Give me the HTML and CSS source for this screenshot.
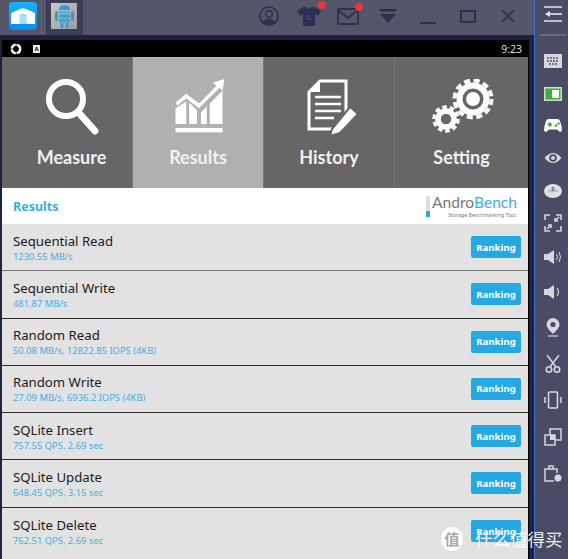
FILE: index.html
```html
<!DOCTYPE html>
<html lang="en">
<head>
  <meta charset="UTF-8">
  <title>AndroBench Results</title>
  <link rel="stylesheet" href="styles.css">
</head>
<body>
  <div class="window">
    <div class="main">
      <header class="titlebar">
        <div class="home-tab">
          <div class="home-tile">
            <svg width="24" height="16" viewBox="0 0 24 16"><path d="M0 5 Q6 2 12 0 Q18 2 24 5 V16 H0Z" fill="#fff"/><rect x="8.500" y="6" width="7" height="10" fill="#a5dcf8"/></svg>
          </div>
        </div>
        <div class="app-tab">
          <div class="app-tile">
            <svg width="19" height="24" viewBox="0 0 19 24"><path d="M4 6 Q4 1 9.500 1 Q15 1 15 6Z" fill="#2e9cd6"/><path d="M4 7 H15 V9.500 H4Z" fill="#4ab2e6"/><path d="M4 10.500 H15 V13.500 H4Z" fill="#2e9cd6"/><path d="M4 14.500 H15 V18.500 H4Z" fill="#3aa6de"/><rect x="0" y="7" width="3" height="10" rx="1.500" fill="#2e9cd6"/><rect x="16" y="7" width="3" height="10" rx="1.500" fill="#2e9cd6"/><rect x="5.500" y="19" width="3" height="5" rx="1" fill="#2e9cd6"/><rect x="10.500" y="19" width="3" height="5" rx="1" fill="#2e9cd6"/></svg>
          </div>
        </div>
        <div class="title-actions">
          <svg class="act act-user" width="20" height="20" viewBox="0 0 20 20"><circle cx="10" cy="10" r="9" fill="none" stroke="#2d3050" stroke-width="1.600"/><circle cx="10" cy="8" r="3.400" fill="none" stroke="#2d3050" stroke-width="1.600"/><path d="M3.500 16 Q10 9.500 16.500 16 Q10 21 3.500 16Z" fill="#2d3050"/></svg>
          <div class="act act-shirt">
            <svg width="26" height="20" viewBox="0 0 26 20"><path d="M7 1 L10 1 Q13 4 16 1 L19 1 L25 5 L22 10 L19 8 V20 H7 V8 L4 10 L1 5Z" fill="#2d3050"/><path d="M10 10 H15 M16 13 H11" stroke="#555669" stroke-width="1.200"/></svg>
            <span class="dot"></span>
          </div>
          <div class="act act-mail">
            <svg width="22" height="17" viewBox="0 0 22 17"><rect x="1" y="1" width="20" height="15" rx="1.500" fill="none" stroke="#2d3050" stroke-width="2"/><path d="M1 2 L11 10 L21 2" fill="none" stroke="#2d3050" stroke-width="2"/></svg>
            <span class="dot"></span>
          </div>
          <svg class="act act-drop" width="16" height="14" viewBox="0 0 16 14" fill="#2d3050"><rect width="16" height="2.500"/><path d="M0 5 H16 L8 14Z"/></svg>
          <span class="act act-min"></span>
          <span class="act act-max"></span>
          <svg class="act act-close" width="14" height="14" viewBox="0 0 14 14"><path d="M1 1 L13 13 M13 1 L1 13" stroke="#2d3050" stroke-width="1.800"/></svg>
        </div>
      </header>

      <div class="device">
        <div class="statusbar">
          <svg width="12" height="12" viewBox="0 0 12 12"><circle cx="6" cy="6" r="4.200" fill="none" stroke="#fff" stroke-width="2.400" stroke-dasharray="5.800 0.800"/></svg>
          <span class="status-a">A</span>
          <span class="status-time">9:23</span>
        </div>

        <nav class="tabs">
          <div class="tab tab-first">
            <svg class="tab-icon" width="56" height="60" viewBox="0 0 56 60"><circle cx="22" cy="20" r="17" fill="none" stroke="#fff" stroke-width="6"/><path d="M35 34 L51 52" stroke="#fff" stroke-width="7" stroke-linecap="round"/></svg>
            <span>Measure</span>
          </div>
          <div class="tab tab-active">
            <svg class="tab-icon" width="56" height="60" viewBox="0 0 56 60" fill="#fff"><g transform="translate(3.500,-3) scale(0.98)"><path d="M2 27 L13 18 L26 28 L44 10 L40 7 L52 3 L50 15 L47 12 L26 33 L13 23 L4 30Z"/><path d="M2 33 L13 26 V49 H2Z M16 27 L24 35 V49 H16Z M28 37 L34 31 V49 H28Z M37 28 L50 15 V49 H37Z"/><rect x="2" y="53" width="48" height="4.500"/></g></svg>
            <span>Results</span>
          </div>
          <div class="tab">
            <svg class="tab-icon tab-icon-history" width="56" height="60" viewBox="0 0 56 60"><path d="M14 2 H40 V34 L27 50 H3 V13Z" fill="none" stroke="#fff" stroke-width="3"/><path d="M14 2 V13 H3Z" fill="#fff"/><path d="M9 18 H35 M9 25 H35 M9 32 H35 M9 39 H28" stroke="#fff" stroke-width="2.600"/><path d="M26 50 L44 28 L52 35 L34 54 L24 57Z" fill="#fff" stroke="#666" stroke-width="2"/></svg>
            <span>History</span>
          </div>
          <div class="tab tab-last">
            <svg class="tab-icon" width="64" height="60" viewBox="0 0 64 60">
              <circle cx="43" cy="20" r="13.500" fill="none" stroke="#fff" stroke-width="6"/>
              <circle cx="43" cy="20" r="7" fill="#fff"/>
              <circle cx="43" cy="20" r="18.500" fill="none" stroke="#fff" stroke-width="4" stroke-dasharray="6 3.700"/>
              <circle cx="16" cy="40" r="8" fill="none" stroke="#fff" stroke-width="5.500"/>
              <circle cx="16" cy="40" r="12" fill="none" stroke="#fff" stroke-width="3.500" stroke-dasharray="4.500 3"/>
            </svg>
            <span>Setting</span>
          </div>
        </nav>

        <div class="results-head">
          <h1>Results</h1>
          <div class="logo">
            <span class="logo-bar"></span>
            <div>
              <div class="logo-name"><b>Andro</b><i>Bench</i></div>
              <div class="logo-sub">Storage Benchmarking Tool.</div>
            </div>
          </div>
        </div>

        <ul class="rows">
          <li class="row"><div class="row-text"><div class="row-name">Sequential Read</div><div class="row-val">1230.55 MB/s</div></div><button class="rank">Ranking</button></li>
          <li class="row"><div class="row-text"><div class="row-name">Sequential Write</div><div class="row-val">481.87 MB/s</div></div><button class="rank">Ranking</button></li>
          <li class="row"><div class="row-text"><div class="row-name">Random Read</div><div class="row-val">50.08 MB/s, 12822.85 IOPS (4KB)</div></div><button class="rank">Ranking</button></li>
          <li class="row"><div class="row-text"><div class="row-name">Random Write</div><div class="row-val">27.09 MB/s, 6936.2 IOPS (4KB)</div></div><button class="rank">Ranking</button></li>
          <li class="row"><div class="row-text"><div class="row-name">SQLite Insert</div><div class="row-val">757.55 QPS, 2.69 sec</div></div><button class="rank">Ranking</button></li>
          <li class="row"><div class="row-text"><div class="row-name">SQLite Update</div><div class="row-val">648.45 QPS, 3.15 sec</div></div><button class="rank">Ranking</button></li>
          <li class="row"><div class="row-text"><div class="row-name">SQLite Delete</div><div class="row-val">762.51 QPS, 2.69 sec</div></div><button class="rank">Ranking</button></li>
        </ul>
      </div>
    </div>

    <aside class="sidebar">
      <svg width="18" height="16" viewBox="0 0 18 16"><path d="M0 1 H18 M0 15 H18" stroke="#e4e4ea" stroke-width="1.600"/><path d="M6 8 H18" stroke="#e4e4ea" stroke-width="1.600"/><path d="M1 8 L6 5 V11Z" fill="#e4e4ea"/></svg>
      <span class="side-rule"></span>
      <div class="tools">
        <span class="tool"><svg width="18" height="14" viewBox="0 0 18 14"><rect width="18" height="14" fill="#d6d6dc"/><path d="M3 4 H15 M3 7 H15 M5 10 H13" stroke="#55566e" stroke-width="1.600" stroke-dasharray="2 1"/></svg></span>
        <span class="tool"><svg width="18" height="14" viewBox="0 0 18 14"><rect width="18" height="14" fill="#d6d6dc"/><rect x="1.500" y="1.500" width="15" height="11" fill="#35b52e"/><rect x="8" y="3" width="7" height="8" fill="#fff"/></svg></span>
        <span class="tool"><svg width="18" height="14" viewBox="0 0 18 14"><path d="M4 0 H14 Q17 1 18 11 Q17 15 13 10.500 H5 Q1 15 0 11 Q1 1 4 0Z" fill="#fff"/><path d="M3.500 5.500 H8 M5.700 3.300 V7.700" stroke="#3fae2a" stroke-width="1.800"/><circle cx="12" cy="6.500" r="1.300" fill="#3fae2a"/><circle cx="14.500" cy="4.500" r="1.300" fill="#3fae2a"/></svg></span>
        <span class="tool"><svg width="18" height="12" viewBox="0 0 18 12"><path d="M0.500 6 Q9 -4 17.500 6 Q9 16 0.500 6Z" fill="#d6d6dc"/><circle cx="9" cy="6" r="3.800" fill="#4a4b64"/><circle cx="9" cy="6" r="2" fill="#d6d6dc"/></svg></span>
        <span class="tool"><svg width="18" height="14" viewBox="0 0 18 14"><ellipse cx="9" cy="7" rx="9" ry="7" fill="#e0e0e4"/><path d="M9 2 V7 M4 7 H14" stroke="#9a9aa6" stroke-width="1"/><rect x="7.600" y="3" width="2.800" height="4" rx="1" fill="#8a8a96"/></svg></span>
        <span class="tool"><svg width="18" height="18" viewBox="0 0 18 18" fill="none" stroke="#d6d6dc" stroke-width="1.600"><path d="M1 6 V1 H6 M12 1 H17 V6 M17 12 V17 H12 M6 17 H1 V12"/><path d="M11 7 L15 3 M11 4 V7 H14 M7 11 L3 15 M4 11 H7 V14"/></svg></span>
        <span class="tool tool-vol"><svg width="18" height="18" viewBox="0 0 18 18"><path d="M0 6 H4 L10 2 V16 L4 12 H0Z" fill="#d6d6dc"/><path d="M12.500 6 Q14.500 9 12.500 12 M15 4 Q18 9 15 14" fill="none" stroke="#d6d6dc" stroke-width="1"/></svg></span>
        <span class="tool tool-vol"><svg width="18" height="18" viewBox="0 0 18 18"><path d="M0 6 H4 L10 2 V16 L4 12 H0Z" fill="#d6d6dc"/><path d="M13 5 Q16 9 13 13" fill="none" stroke="#d6d6dc" stroke-width="1.200"/></svg></span>
        <span class="tool tool-tall"><svg width="14" height="19" viewBox="0 0 14 19"><path d="M7 0 A6.500 6.500 0 0 1 13.500 6.500 Q13.500 10 7 16 Q0.500 10 0.500 6.500 A6.500 6.500 0 0 1 7 0Z" fill="#d6d6dc"/><circle cx="7" cy="6.500" r="2.600" fill="#4a4b64"/><path d="M2 18 H12" stroke="#d6d6dc" stroke-width="1.200"/></svg></span>
        <span class="tool tool-tall"><svg width="16" height="18" viewBox="0 0 16 18" fill="none" stroke="#d6d6dc" stroke-width="1.600"><path d="M2 0 L11 12 M14 0 L5 12"/><circle cx="4" cy="14.500" r="2.700"/><circle cx="12" cy="14.500" r="2.700"/></svg></span>
        <span class="tool tool-tall"><svg width="18" height="18" viewBox="0 0 18 18" fill="none" stroke="#d6d6dc" stroke-width="1.600"><rect x="4.500" y="1" width="9" height="16" rx="1"/><path d="M1 6 V12 M17 6 V12"/></svg></span>
        <span class="tool tool-tall"><svg width="18" height="18" viewBox="0 0 18 18"><rect x="6" y="1" width="11" height="11" fill="none" stroke="#d6d6dc" stroke-width="1.500"/><rect x="1" y="7" width="10" height="10" fill="#4a4b64" stroke="#d6d6dc" stroke-width="1.500"/><rect x="6" y="7" width="5" height="5" fill="#d6d6dc"/></svg></span>
        <span class="tool tool-tall"><svg width="18" height="18" viewBox="0 0 18 18"><path d="M10 17 H1 V5 H13 V9" fill="none" stroke="#d6d6dc" stroke-width="1.500"/><path d="M5 5 V2 H9 V5" fill="none" stroke="#d6d6dc" stroke-width="1.500"/><circle cx="14" cy="14" r="3.500" fill="#d6d6dc"/></svg></span>
      </div>
    </aside>
  </div>

  <div class="watermark">
    <span class="wm-badge">值</span>
    <span class="wm-text">什么值得买</span>
  </div>
</body>
</html>
```

FILE: styles.css
```css
* {
  box-sizing: border-box;
}
html, body {
  margin: 0;
  height: 100%;
  overflow: hidden;
}
body {
  position: relative;
  font-family: "Noto Sans", "Noto Sans CJK SC", sans-serif;
  background: #4a4b64;
}
.window {
  display: flex;
  height: 559px;
}
.main {
  width: 534px;
  display: flex;
  flex-direction: column;
  background: #1e2140;
}

/* title bar */
.titlebar {
  height: 35px;
  flex: none;
  display: flex;
  background: #555669;
}
.home-tab {
  width: 42px;
  padding: 2px 0 0 9px;
  border-right: 1px solid #62637a;
}
.home-tile {
  width: 28px;
  height: 28px;
  border-radius: 4px;
  background: linear-gradient(#18b2f5, #0a8df0);
  display: flex;
  align-items: center;
  justify-content: center;
}
.app-tab {
  width: 37px;
  margin-left: 4px;
  padding: 3px 0 0 5px;
  background: #3c3e5a;
}
.app-tile {
  width: 26px;
  height: 26px;
  background: linear-gradient(135deg, #c9c9c9, #9b9b9b);
  display: flex;
  align-items: center;
  justify-content: center;
}
.title-actions {
  flex: 1;
  display: flex;
  align-items: center;
  padding: 0 0 3px 176px;
}
.act {
  flex: none;
  position: relative;
}
.act-user { margin-right: 17px; }
.act-shirt { margin-right: 15px; width: 26px; height: 20px; }
.act-mail { margin-right: 21px; width: 22px; height: 17px; }
.act-drop { margin-right: 24px; }
.act-min {
  width: 16px;
  height: 2px;
  margin: 14px 24px 0 0;
  background: #2d3050;
}
.act-max {
  width: 16px;
  height: 13px;
  margin-right: 25px;
  border: 2px solid #2d3050;
}
.dot {
  position: absolute;
  top: -5px;
  right: -4px;
  width: 8px;
  height: 8px;
  border-radius: 50%;
  background: #f5352c;
}

/* emulated device */
.device {
  flex: 1;
  min-height: 0;
  margin: 5px 5px 0 2px;
  display: flex;
  flex-direction: column;
  border-right: 1px solid #000;
  background: #e2e2e2;
}
.statusbar {
  height: 17px;
  flex: none;
  display: flex;
  align-items: center;
  gap: 11px;
  padding: 0 6px 0 8px;
  background: #000;
  color: #ddd;
}
.status-a {
  width: 7px;
  height: 8px;
  background: #eee;
  color: #000;
  font-size: 6px;
  font-weight: 700;
  line-height: 8px;
  text-align: center;
}
.status-time {
  margin-left: auto;
  font-size: 10.5px;
}
.tabs {
  height: 131px;
  flex: none;
  display: flex;
  background: #666;
}
.tab {
  width: 131px;
  display: flex;
  flex-direction: column;
  align-items: center;
  padding-top: 22px;
  border-right: 1px solid #7a7a7a;
  color: #f0f0f0;
  font-family: Lato, "Noto Sans", sans-serif;
  font-size: 18px;
  font-weight: 700;
  line-height: 22px;
}
.tab-first {
  padding-left: 9px;
}
.tab-active {
  background: #b0b0b0;
}
.tab-last {
  flex: 1;
  border-right: 0;
}
.tab-icon {
  margin-bottom: 7px;
}
.tab-icon-history {
  margin-left: 10px;
}
.results-head {
  height: 36px;
  flex: none;
  display: flex;
  align-items: center;
  justify-content: space-between;
  padding: 0 11px;
  background: #fff;
}
.results-head h1 {
  margin: 0;
  color: #35aee3;
  font-size: 12.5px;
  font-weight: 700;
}
.logo {
  display: flex;
  align-items: center;
  gap: 2px;
}
.logo-bar {
  width: 4px;
  height: 21px;
  background: linear-gradient(#ddd 70%, #2ba8e0 70%);
}
.logo-name {
  font-family: Lato, "Noto Sans", sans-serif;
  font-size: 15.6px;
  line-height: normal;
}
.logo-name b {
  font-weight: 400;
  color: #777;
}
.logo-name i {
  font-style: normal;
  color: #3fb0e4;
}
.logo-sub {
  font-size: 5.2px;
  line-height: normal;
  text-align: right;
  color: #777;
}

/* result rows */
.rows {
  flex: 1;
  min-height: 0;
  margin: 0;
  padding: 0;
  list-style: none;
  overflow: hidden;
}
.row {
  height: 47.25px;
  display: flex;
  align-items: center;
  justify-content: space-between;
  padding: 0 7px 0 11px;
  border-bottom: 1px solid #2a2a2a;
}
.row:first-child {
  border-bottom-color: #777;
}
.row:last-child {
  border-bottom: 0;
}
.row-text {
  padding-top: 1px;
}
.row-name {
  font-size: 13.2px;
  line-height: 17px;
  color: #1a1a1a;
}
.row-val {
  font-size: 9.4px;
  line-height: 13px;
  color: #45ade2;
}
.rank {
  width: 50px;
  height: 22px;
  padding: 0;
  border: 0;
  border-radius: 2px;
  background: #25a9e3;
  color: #fff;
  font-family: inherit;
  font-size: 9.6px;
  font-weight: 700;
}

/* right tool strip */
.sidebar {
  flex: 1;
  display: flex;
  flex-direction: column;
  align-items: center;
  padding: 6px 0 0 3px;
  border-left: 1px solid #3b6fd6;
  background: #4a4b64;
}
.side-rule {
  width: 26px;
  height: 2px;
  margin: 12px 0 9px;
  background: #6b6c82;
}
.tools {
  display: flex;
  flex-direction: column;
  align-items: center;
}
.tool {
  height: 32.4px;
  display: flex;
  align-items: center;
}
.tool-vol {
  height: 35px;
}
.tool-tall {
  height: 36.4px;
}

/* site watermark over the shot */
.watermark {
  position: absolute;
  left: 441px;
  top: 527px;
  display: flex;
  align-items: center;
  gap: 12px;
  color: rgba(255, 255, 255, 0.92);
}
.wm-badge {
  width: 22px;
  height: 24px;
  border-radius: 50%;
  background: rgba(255, 255, 255, 0.9);
  color: #aaa;
  font-size: 15px;
  font-weight: 700;
  line-height: 24px;
  text-align: center;
}
.wm-text {
  font-size: 17.5px;
  line-height: 24px;
}
```
